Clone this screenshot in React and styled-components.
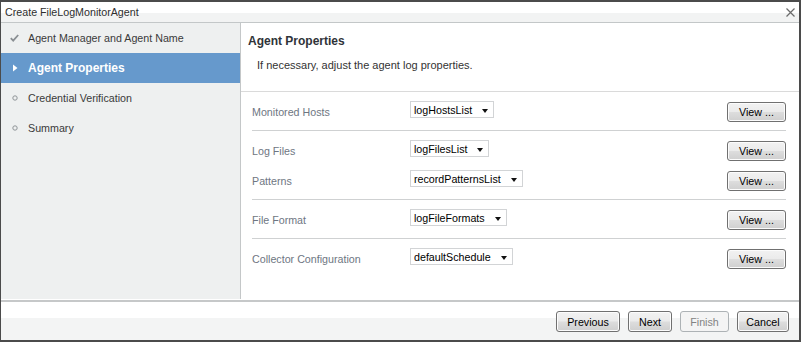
import styled, { createGlobalStyle } from "styled-components";

const GlobalStyle = createGlobalStyle`
  html, body {
    margin: 0;
    padding: 0;
    background: #ffffff;
  }
  body {
    font-family: "Liberation Sans", Arial, sans-serif;
  }
`;

const Dialog = styled.div`
  width: 801px;
  height: 342px;
  box-sizing: border-box;
  border: 2px solid #4b4b4b;
  border-left-width: 1px;
  display: flex;
  flex-direction: column;
  background: #ffffff;
  font-size: 10.7px;
  color: #333333;
`;

const TitleBar = styled.div`
  height: 20px;
  flex: none;
  display: flex;
  align-items: center;
  justify-content: space-between;
  padding: 0 3px 0 4px;
  background: linear-gradient(#ffffff 0, #ffffff 11px, #f2f3f3 11px, #f2f3f3 100%);
  border-bottom: 1px solid #c3c7c8;
`;

const Title = styled.span`
  font-size: 10.7px;
  color: #2e2e2e;
`;

const CloseButton = styled.button`
  border: 0;
  background: none;
  padding: 0;
  width: 10px;
  height: 10px;
  margin-right: 1px;
  display: flex;
  align-items: center;
  justify-content: center;
`;

const Body = styled.div`
  flex: none;
  height: 276px;
  display: flex;
`;

const Sidebar = styled.ul`
  list-style: none;
  margin: 0;
  padding: 0;
  width: 239px;
  flex: none;
  background: #eef0f0;
  border-right: 1px solid #c4c7c8;
`;

const Step = styled.li`
  height: 30px;
  display: flex;
  align-items: center;
  padding-left: 9px;
  gap: 9px;
  background: ${({ active }) => (active ? "#6699cc" : "transparent")};
  color: ${({ active }) => (active ? "#ffffff" : "#3a3a3a")};
  font-weight: ${({ active }) => (active ? "bold" : "normal")};
  font-size: ${({ active }) => (active ? "12px" : "10.7px")};
`;

const StepIcon = styled.span`
  width: 9px;
  height: 9px;
  display: flex;
  align-items: center;
  justify-content: center;
`;

const Main = styled.section`
  flex: 1;
  display: flex;
  flex-direction: column;
`;

const Header = styled.div`
  height: 69px;
  box-sizing: border-box;
  padding: 11px 0 0 7px;
  border-bottom: 1px solid #dadada;
`;

const Heading = styled.h2`
  margin: 0;
  font-size: 12px;
  font-weight: bold;
  color: #2f3338;
  line-height: 14px;
`;

const Intro = styled.p`
  margin: 10px 0 0 9px;
  font-size: 11px;
  line-height: 14px;
  color: #333333;
`;

const Form = styled.div`
  padding: 0 13px 0 11px;
`;

const Group = styled.div`
  padding: 4px 0;
  border-bottom: ${({ last }) => (last ? "0" : "1px solid #cfd1d2")};
`;

const Row = styled.div`
  height: 30px;
  display: flex;
  align-items: center;
`;

const Label = styled.span`
  width: 158px;
  flex: none;
  color: #6e7682;
  padding-top: 1px;
`;

const Select = styled.div`
  display: inline-flex;
  align-items: center;
  height: 15px;
  box-sizing: content-box;
  border: 1px solid #d2d4d6;
  background: #ffffff;
  padding: 0 5px 0 3px;
  gap: 10px;
  color: #000000;
  margin-bottom: 3px;
`;

const Caret = styled.span`
  width: 0;
  height: 0;
  border-left: 3.5px solid transparent;
  border-right: 3.5px solid transparent;
  border-top: 4px solid #111111;
  margin-top: 2px;
`;

const Button = styled.button`
  height: ${({ tall }) => (tall ? "21px" : "20px")};
  width: ${({ w }) => w}px;
  box-sizing: border-box;
  border: 1px solid ${({ disabled }) => (disabled ? "#adb2b5" : "#707070")};
  border-radius: 3px;
  padding: 0;
  font-family: "Liberation Sans", Arial, sans-serif;
  font-size: 10.7px;
  color: ${({ disabled }) => (disabled ? "#838383" : "#000000")};
  background: ${({ disabled }) =>
    disabled
      ? "#f4f4f4"
      : "linear-gradient(#f2f2f2 0%, #ebebeb 48%, #dddddd 52%, #cfcfcf 100%)"};
  box-shadow: ${({ disabled }) => (disabled ? "none" : "inset 0 0 0 1px #fcfcfc")};
`;

const ViewButton = styled(Button)`
  margin-left: auto;
  margin-top: 2px;
`;

const Footer = styled.div`
  flex: 1;
  border-top: 2px solid #c6c8c9;
  margin-top: 1px;
  display: flex;
  align-items: center;
  justify-content: flex-end;
  gap: 8px;
  padding: 1px 10px 0 0;
  background: linear-gradient(#ffffff 0, #ffffff 16px, #f3f4f4 16px, #f3f4f4 100%);
`;

const steps = [
  { name: "Agent Manager and Agent Name", state: "done" },
  { name: "Agent Properties", state: "active" },
  { name: "Credential Verification", state: "todo" },
  { name: "Summary", state: "todo" },
];

const groups = [
  [{ label: "Monitored Hosts", value: "logHostsList" }],
  [
    { label: "Log Files", value: "logFilesList" },
    { label: "Patterns", value: "recordPatternsList" },
  ],
  [{ label: "File Format", value: "logFileFormats" }],
  [{ label: "Collector Configuration", value: "defaultSchedule" }],
];

function StepGlyph({ state }) {
  if (state === "done") {
    return (
      <svg width="9" height="8" viewBox="0 0 9 8">
        <path d="M0.8 4.2 L3.2 6.6 L8.2 1" fill="none" stroke="#8a8f93" strokeWidth="1.8" />
      </svg>
    );
  }
  if (state === "active") {
    return (
      <svg width="6" height="8" viewBox="0 0 6 8">
        <path d="M1 0.5 L5.5 4 L1 7.5 Z" fill="#ffffff" />
      </svg>
    );
  }
  return (
    <svg width="6" height="6" viewBox="0 0 6 6">
      <circle cx="3" cy="3" r="2.2" fill="none" stroke="#8f9498" strokeWidth="1" />
    </svg>
  );
}

export default function App() {
  return (
    <>
      <GlobalStyle />
      <Dialog>
        <TitleBar>
          <Title>Create FileLogMonitorAgent</Title>
          <CloseButton aria-label="Close">
            <svg width="9" height="9" viewBox="0 0 9 9">
              <path d="M0.5 0.5 L8.5 8.5 M8.5 0.5 L0.5 8.5" stroke="#6b6b6b" strokeWidth="1.2" />
            </svg>
          </CloseButton>
        </TitleBar>
        <Body>
          <Sidebar>
            {steps.map((s) => (
              <Step key={s.name} active={s.state === "active"}>
                <StepIcon>
                  <StepGlyph state={s.state} />
                </StepIcon>
                {s.name}
              </Step>
            ))}
          </Sidebar>
          <Main>
            <Header>
              <Heading>Agent Properties</Heading>
              <Intro>If necessary, adjust the agent log properties.</Intro>
            </Header>
            <Form>
              {groups.map((g, i) => (
                <Group key={i} last={i === groups.length - 1}>
                  {g.map((r) => (
                    <Row key={r.label}>
                      <Label>{r.label}</Label>
                      <Select>
                        {r.value}
                        <Caret />
                      </Select>
                      <ViewButton w={59}>View ...</ViewButton>
                    </Row>
                  ))}
                </Group>
              ))}
            </Form>
          </Main>
        </Body>
        <Footer>
          <Button tall w={64}>Previous</Button>
          <Button tall w={44}>Next</Button>
          <Button tall w={49} disabled>Finish</Button>
          <Button tall w={52}>Cancel</Button>
        </Footer>
      </Dialog>
    </>
  );
}
